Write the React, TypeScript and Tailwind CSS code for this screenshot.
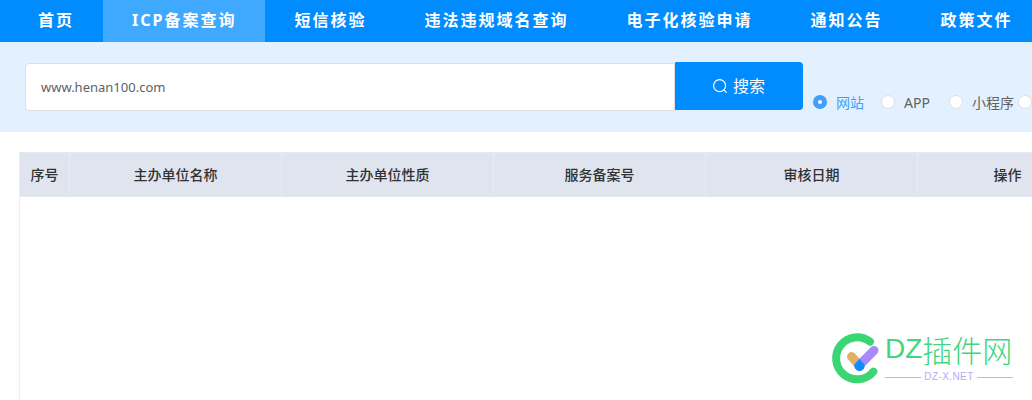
import React from "react";

const nav = ["首页", "ICP备案查询", "短信核验", "违法违规域名查询", "电子化核验申请", "通知公告", "政策文件"];
const cols: { t: string; w: string }[] = [
  { t: "序号", w: "w-[50px]" },
  { t: "主办单位名称", w: "w-[212px]" },
  { t: "主办单位性质", w: "w-[212px]" },
  { t: "服务备案号", w: "w-[212px]" },
  { t: "审核日期", w: "w-[212px]" },
  { t: "操作", w: "w-[180px]" },
];
const radios = [
  { t: "网站", on: true, w: "w-[68px]" },
  { t: "APP", on: false, w: "w-[68px]" },
  { t: "小程序", on: false, w: "w-[69px]" },
  { t: "", on: false, w: "w-[14px]" },
];

export default function App() {
  return (
    <div className="relative w-[1032px] h-[400px] overflow-hidden bg-white font-['Noto_Sans','Noto_Sans_CJK_SC',sans-serif]">
      <nav className="flex h-[42px] pl-[9px] bg-[#008cff] whitespace-nowrap">
        {nav.map((n, i) => (
          <div
            key={n}
            className={
              i === 1
                ? "shrink-0 px-[29px] leading-[41px] text-[16px] font-bold tracking-[2px] text-white bg-[#3fa9ff]"
                : "shrink-0 px-[29px] leading-[41px] text-[16px] font-bold tracking-[2px] text-white"
            }
          >
            {n}
          </div>
        ))}
      </nav>

      <section className="flex h-[90px] pl-[25px] pt-[20px] bg-[#e3f1ff]">
        <input
          readOnly
          value="www.henan100.com"
          className="w-[650px] h-[48px] mt-[1px] px-[15px] text-[13px] text-[#606266] bg-white border border-[#dcdfe6] rounded-l-[4px] outline-none"
        />
        <button className="flex items-center justify-center gap-[6px] w-[128px] h-[48px] text-[16px] text-white bg-[#008cff] rounded-r-[4px] rounded-tl-[1px]">
          <svg width="14" height="14" viewBox="0 0 14 14" fill="none" stroke="#fff" strokeWidth="1.2">
            <circle cx="6.6" cy="6.6" r="6" />
            <path d="M10.9 10.9l2.4 2.4" strokeLinecap="round" />
          </svg>
          <span>搜索</span>
        </button>
        <div className="flex items-center h-[20px] mt-[30px] ml-[10px] whitespace-nowrap">
          {radios.map((r, i) => (
            <div key={i} className={`flex items-center shrink-0 ${r.w}`}>
              <span
                className={
                  r.on
                    ? "flex items-center justify-center shrink-0 w-[14px] h-[14px] rounded-full bg-[#409eff]"
                    : "shrink-0 w-[14px] h-[14px] rounded-full bg-white border border-[#dcdfe6]"
                }
              >
                {r.on && <span className="w-[4px] h-[4px] rounded-full bg-white" />}
              </span>
              {r.t && (
                <span className={r.on ? "ml-[9px] text-[14px] text-[#409eff]" : "ml-[9px] text-[14px] text-[#606266]"}>
                  {r.t}
                </span>
              )}
            </div>
          ))}
        </div>
      </section>

      <section className="ml-[19px] mt-[20px] h-[248px] border-l border-[#ebeef5]">
        <div className="flex w-[1100px] h-[45px] bg-[#e0e4ef] border-y border-[#e6e9f2]">
          {cols.map((c) => (
            <div
              key={c.t}
              className={`flex items-center justify-center shrink-0 ${c.w} border-r border-[#e9ecf4] text-[14px] font-medium text-[#303133]`}
            >
              {c.t}
            </div>
          ))}
        </div>
      </section>

      <div className="absolute left-[826px] top-[330px] w-[200px] h-[64px]">
        <svg width="60" height="60" viewBox="0 0 60 60" fill="none" className="absolute left-0 top-0">
          <path d="M44 11.7A21 21 0 1 0 47.3 41.7" stroke="#39d673" strokeWidth="8" strokeLinecap="round" />
          <path d="M25.5 26.5L33 35" stroke="#e2b062" strokeWidth="9" strokeLinecap="round" />
          <path d="M33.5 35L48 20.5" stroke="#a78bfa" strokeWidth="9" strokeLinecap="round" />
          <path d="M33.5 29L38.5 34.5A5.2 5.2 0 1 1 28.5 34.5Z" fill="#0d8bff" />
        </svg>
        <div className="absolute left-[59px] top-[1px] flex items-center h-[36px] text-[#3fd67c] whitespace-nowrap">
          <span className="text-[28px] leading-[36px] font-['Liberation_Sans']">DZ</span>
          <span className="text-[30px] leading-[36px] font-['Noto_Sans_CJK_SC'] font-light">插件网</span>
        </div>
        <div className="absolute left-[59px] top-[41px] flex items-center w-[128px] h-[12px] gap-[3px]">
          <span className="flex-1 h-px bg-[#c0b4f8]" />
          <span className="text-[10px] leading-[12px] tracking-[0.4px] text-[#b7a7f5] font-['Liberation_Sans']">DZ-X.NET</span>
          <span className="flex-1 h-px bg-[#c0b4f8]" />
        </div>
      </div>
    </div>
  );
}
